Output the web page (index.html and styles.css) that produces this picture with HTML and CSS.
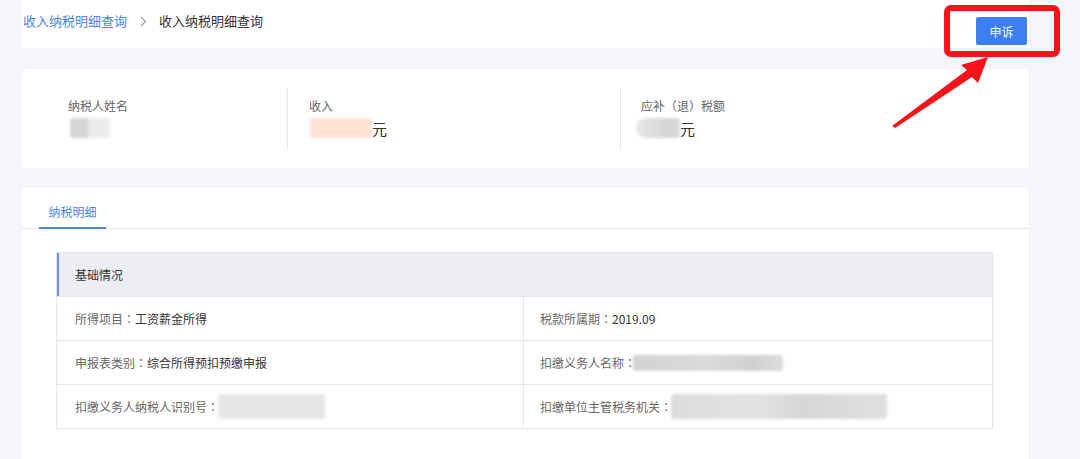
FILE: index.html
```html
<!DOCTYPE html>
<html lang="zh-CN">
<head>
    <meta charset="UTF-8">
    <meta name="viewport" content="width=device-width, initial-scale=1.0">
    <title>收入纳税明细查询</title>
    <link rel="stylesheet" href="styles.css">
</head>
<body>
    <div class="page">
        <!-- 顶部面包屑 + 申诉按钮 -->
        <div class="topbar">
            <div class="crumbs">
                <a class="crumb-link" href="javascript:;">收入纳税明细查询</a>
                <svg class="crumb-sep" width="7" height="11" viewBox="0 0 7 11"><path d="M1 1l4.5 4.5L1 10" fill="none" stroke="#9a9a9a" stroke-width="1.1"/></svg>
                <span class="crumb-cur">收入纳税明细查询</span>
            </div>
            <button class="btn-appeal">申诉</button>
        </div>

        <!-- 汇总信息 -->
        <div class="summary">
            <div class="sum-col col-name">
                <div class="sum-label">纳税人姓名</div>
                <div class="sum-value"><span class="mask mask-name"></span></div>
            </div>
            <div class="sum-col col-income">
                <div class="sum-label">收入</div>
                <div class="sum-value"><span class="mask mask-income"></span><span class="unit">元</span></div>
            </div>
            <div class="sum-col col-tax">
                <div class="sum-label">应补（退）税额</div>
                <div class="sum-value"><span class="mask mask-tax"></span><span class="unit">元</span></div>
            </div>
        </div>

        <!-- 纳税明细 -->
        <div class="detail">
            <div class="tabs">
                <span class="tab active">纳税明细</span>
            </div>
            <div class="info-table">
                <div class="info-head">基础情况</div>
                <div class="info-grid">
                    <div class="cell"><span class="k">所得项目<i class="colon" lang="zh-TW">：</i></span><span class="v">工资薪金所得</span></div>
                    <div class="cell"><span class="k">税款所属期<i class="colon" lang="zh-TW">：</i></span><span class="v">2019.09</span></div>
                    <div class="cell"><span class="k">申报表类别<i class="colon" lang="zh-TW">：</i></span><span class="v">综合所得预扣预缴申报</span></div>
                    <div class="cell"><span class="k">扣缴义务人名称<i class="colon" lang="zh-TW">：</i></span><span class="mask mask-agent"></span></div>
                    <div class="cell"><span class="k">扣缴义务人纳税人识别号<i class="colon" lang="zh-TW">：</i></span><span class="mask mask-id"></span></div>
                    <div class="cell"><span class="k">扣缴单位主管税务机关<i class="colon" lang="zh-TW">：</i></span><span class="mask mask-office"></span></div>
                </div>
            </div>
        </div>
    </div>

    <!-- 红框和箭头标注 -->
    <svg class="annot" width="1080" height="459" viewBox="0 0 1080 459">
        <rect x="947" y="8" width="110" height="46" rx="4" fill="none" stroke="#f5141a" stroke-width="6"/>
        <polygon points="988,57 961,65 967,70 892,126 895,128 972,77 978,83" fill="#f5141a"/>
    </svg>
</body>
</html>
```

FILE: styles.css
```css
*{
    margin: 0;
    padding: 0;
    box-sizing: border-box;
}
body{
    width: 1080px;
    height: 459px;
    overflow: hidden;
    position: relative;
    background-color: #f5f6fa;
    font-family: "Noto Sans CJK SC", "Microsoft YaHei", sans-serif;
    font-size: 12px;
    color: #333;
}
.page{
    width: 1006px;
    margin-left: 22px;
    height: 459px;
    display: flex;
    flex-direction: column;
}

/* 顶部 */
.topbar{
    height: 48px;
    background-color: #fff;
    display: flex;
    justify-content: space-between;
    align-items: flex-start;
}
.crumbs{
    display: flex;
    align-items: center;
    padding: 12px 0 0 1px;
    font-size: 13px;
    line-height: 18px;
}
.crumb-link{
    color: #4a84e6;
    text-decoration: none;
}
.crumb-sep{
    margin: 0 12px 0 13px;
}
.crumb-cur{
    color: #333;
}
.btn-appeal{
    margin: 17px 1px 0 0;
    width: 51px;
    height: 28px;
    border: none;
    border-radius: 2px;
    background-color: #3b7ff2;
    color: #fff;
    font-family: inherit;
    font-size: 12px;
}

/* 汇总 */
.summary{
    margin-top: 22px;
    height: 98px;
    padding-top: 18px;
    background-color: #fff;
    display: flex;
    align-items: flex-start;
}
.sum-col{
    height: 62px;
    padding-top: 10px;
}
.col-name{
    width: 265px;
    padding-left: 46px;
}
.col-income{
    width: 333px;
    border-left: 1px solid #e8e8ec;
    padding-left: 21px;
}
.col-tax{
    flex: 1;
    border-left: 1px solid #e8e8ec;
    padding-left: 20px;
}
.sum-label{
    color: #666;
    line-height: 16px;
}
.sum-value{
    margin-top: 4px;
    height: 20px;
    display: flex;
    align-items: center;
}
.unit{
    font-size: 15px;
    color: #333;
}

/* 打码块 */
.mask{
    display: inline-block;
    vertical-align: middle;
    filter: blur(1.5px);
    border-radius: 3px;
}
.mask-name{
    width: 40px;
    height: 20px;
    margin-left: 2px;
    background: linear-gradient(90deg, #d6d6d6 0, #d6d6d6 45%, #e9e9e9 45%, #eeeeee 100%);
}
.mask-income{
    width: 62px;
    height: 20px;
    margin-left: 1px;
    background-color: #fde2d4;
}
.mask-tax{
    width: 44px;
    height: 20px;
    margin-left: -5px;
    border-radius: 10px 3px 3px 10px;
    background: linear-gradient(90deg, #e8e8e8 0, #dedede 40%, #d4d4d4 70%, #dcdcdc 100%);
}
.mask-agent{
    width: 150px;
    height: 16px;
    margin-left: -3px;
    background: linear-gradient(90deg, #d2d2d2 0, #dadada 50%, #d0d0d0 80%, #dcdcdc 100%);
}
.mask-id{
    width: 107px;
    height: 25px;
    margin-left: -1px;
    background-color: #e6e6e6;
}
.mask-office{
    width: 216px;
    height: 25px;
    margin-left: -1px;
    background: linear-gradient(90deg, #dcdcdc 0, #e2e2e2 40%, #d6d6d6 60%, #e0e0e0 100%);
}

/* 明细 */
.detail{
    margin-top: 20px;
    flex: 1;
    background-color: #fff;
}
.tabs{
    height: 41px;
    padding-left: 17px;
    border-bottom: 1px solid #e6e8ec;
    display: flex;
    align-items: flex-start;
}
.tab{
    width: 67px;
    height: 41px;
    padding-top: 16px;
    line-height: 16px;
    text-align: center;
    color: #4a84e6;
    border-bottom: 2px solid #4a84e6;
}
.info-table{
    margin: 23px 0 0 34px;
    width: 937px;
    border: 1px solid #e3e5ea;
}
.info-head{
    height: 43px;
    line-height: 43px;
    padding-left: 18px;
    background-color: #eceef3;
    box-shadow: inset 2px 0 0 #6a94e0;
    color: #333;
}
.info-grid{
    display: grid;
    grid-template-columns: 467px 1fr;
}
.cell{
    height: 44px;
    display: flex;
    align-items: center;
    padding-left: 18px;
    border-top: 1px solid #e3e5ea;
}
.cell:nth-child(odd){
    border-right: 1px solid #e3e5ea;
}
.cell:nth-child(even){
    padding-left: 16px;
}
.k{
    color: #666;
}
/* 冒号居中显示 */
.colon{
    font-style: normal;
    font-family: "Noto Sans CJK TC", sans-serif;
}
.v{
    color: #333;
}

/* 标注 */
.annot{
    position: absolute;
    left: 0;
    top: 0;
    pointer-events: none;
}
```
